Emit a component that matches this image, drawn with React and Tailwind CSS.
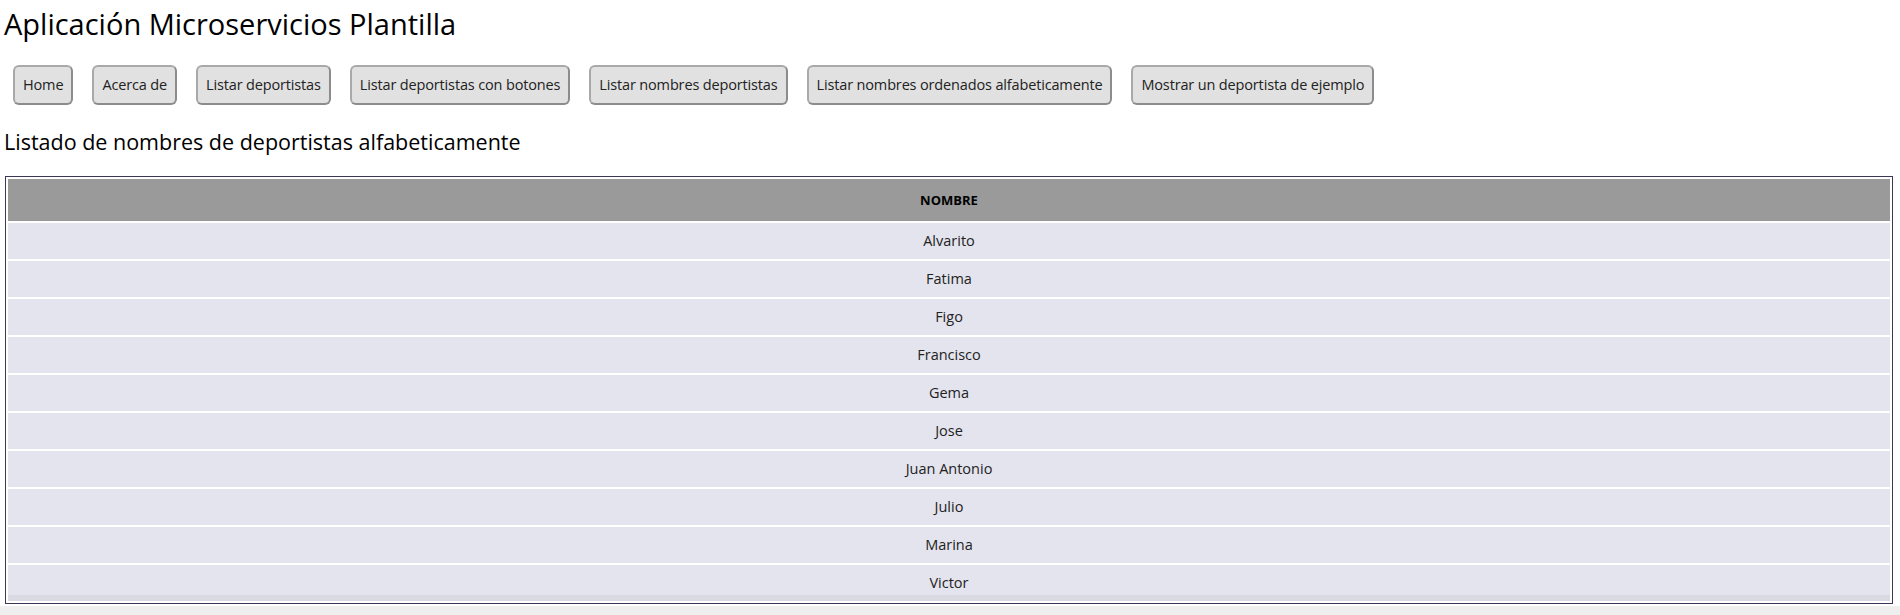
import React from 'react';

const botones = [
  'Home',
  'Acerca de',
  'Listar deportistas',
  'Listar deportistas con botones',
  'Listar nombres deportistas',
  'Listar nombres ordenados alfabeticamente',
  'Mostrar un deportista de ejemplo',
];

const nombres = [
  'Alvarito',
  'Fatima',
  'Figo',
  'Francisco',
  'Gema',
  'Jose',
  'Juan Antonio',
  'Julio',
  'Marina',
  'Victor',
];

const App = () => {
  return (
    <div className="h-[615px] flex flex-col bg-white text-black font-['Open_Sans',sans-serif] overflow-hidden">
      <div className="px-[4px]">
        {/* Cabecera */}
        <h1 className="text-[29px] leading-[36px] pt-[6px]">
          Aplicación Microservicios Plantilla
        </h1>

        {/* Menu */}
        <nav className="flex gap-[19px] mt-[23px] pl-[9px]">
          {botones.map((b) => (
            <button
              key={b}
              className="h-[40px] px-[8px] bg-[#e1e1e1] text-[#222] text-[14.5px] tracking-[-0.15px] border-2 border-[#a9a9a9] border-r-[#8c8c8c] border-b-[#8c8c8c] rounded-md whitespace-nowrap"
            >
              {b}
            </button>
          ))}
        </nav>

        <h2 className="text-[21.5px] leading-[28px] mt-[23px]">
          Listado de nombres de deportistas alfabeticamente
        </h2>
      </div>

      {/* Tabla */}
      <div className="mt-[20px] ml-[5px] mr-[7px]">
        <table className="w-full border border-[#3b3857] border-separate border-spacing-[2px] text-[14.5px] leading-[20px]">
          <thead>
            <tr>
              <th className="h-[42px] p-0 bg-[#9a9a9a] font-bold text-[13px] text-black">NOMBRE</th>
            </tr>
          </thead>
          <tbody>
            {nombres.map((n, i) => (
              <tr key={n}>
                <td
                  className={`h-[36px] p-0 bg-[#e4e4ee] text-center text-[#222] ${
                    i === nombres.length - 1 ? 'shadow-[inset_0_-6px_0_#d9d9e2]' : ''
                  }`}
                >
                  {n}
                </td>
              </tr>
            ))}
          </tbody>
        </table>
      </div>

      <div className="flex-1 bg-[#efefef] mt-[2px]" />
    </div>
  );
};

export default App;
